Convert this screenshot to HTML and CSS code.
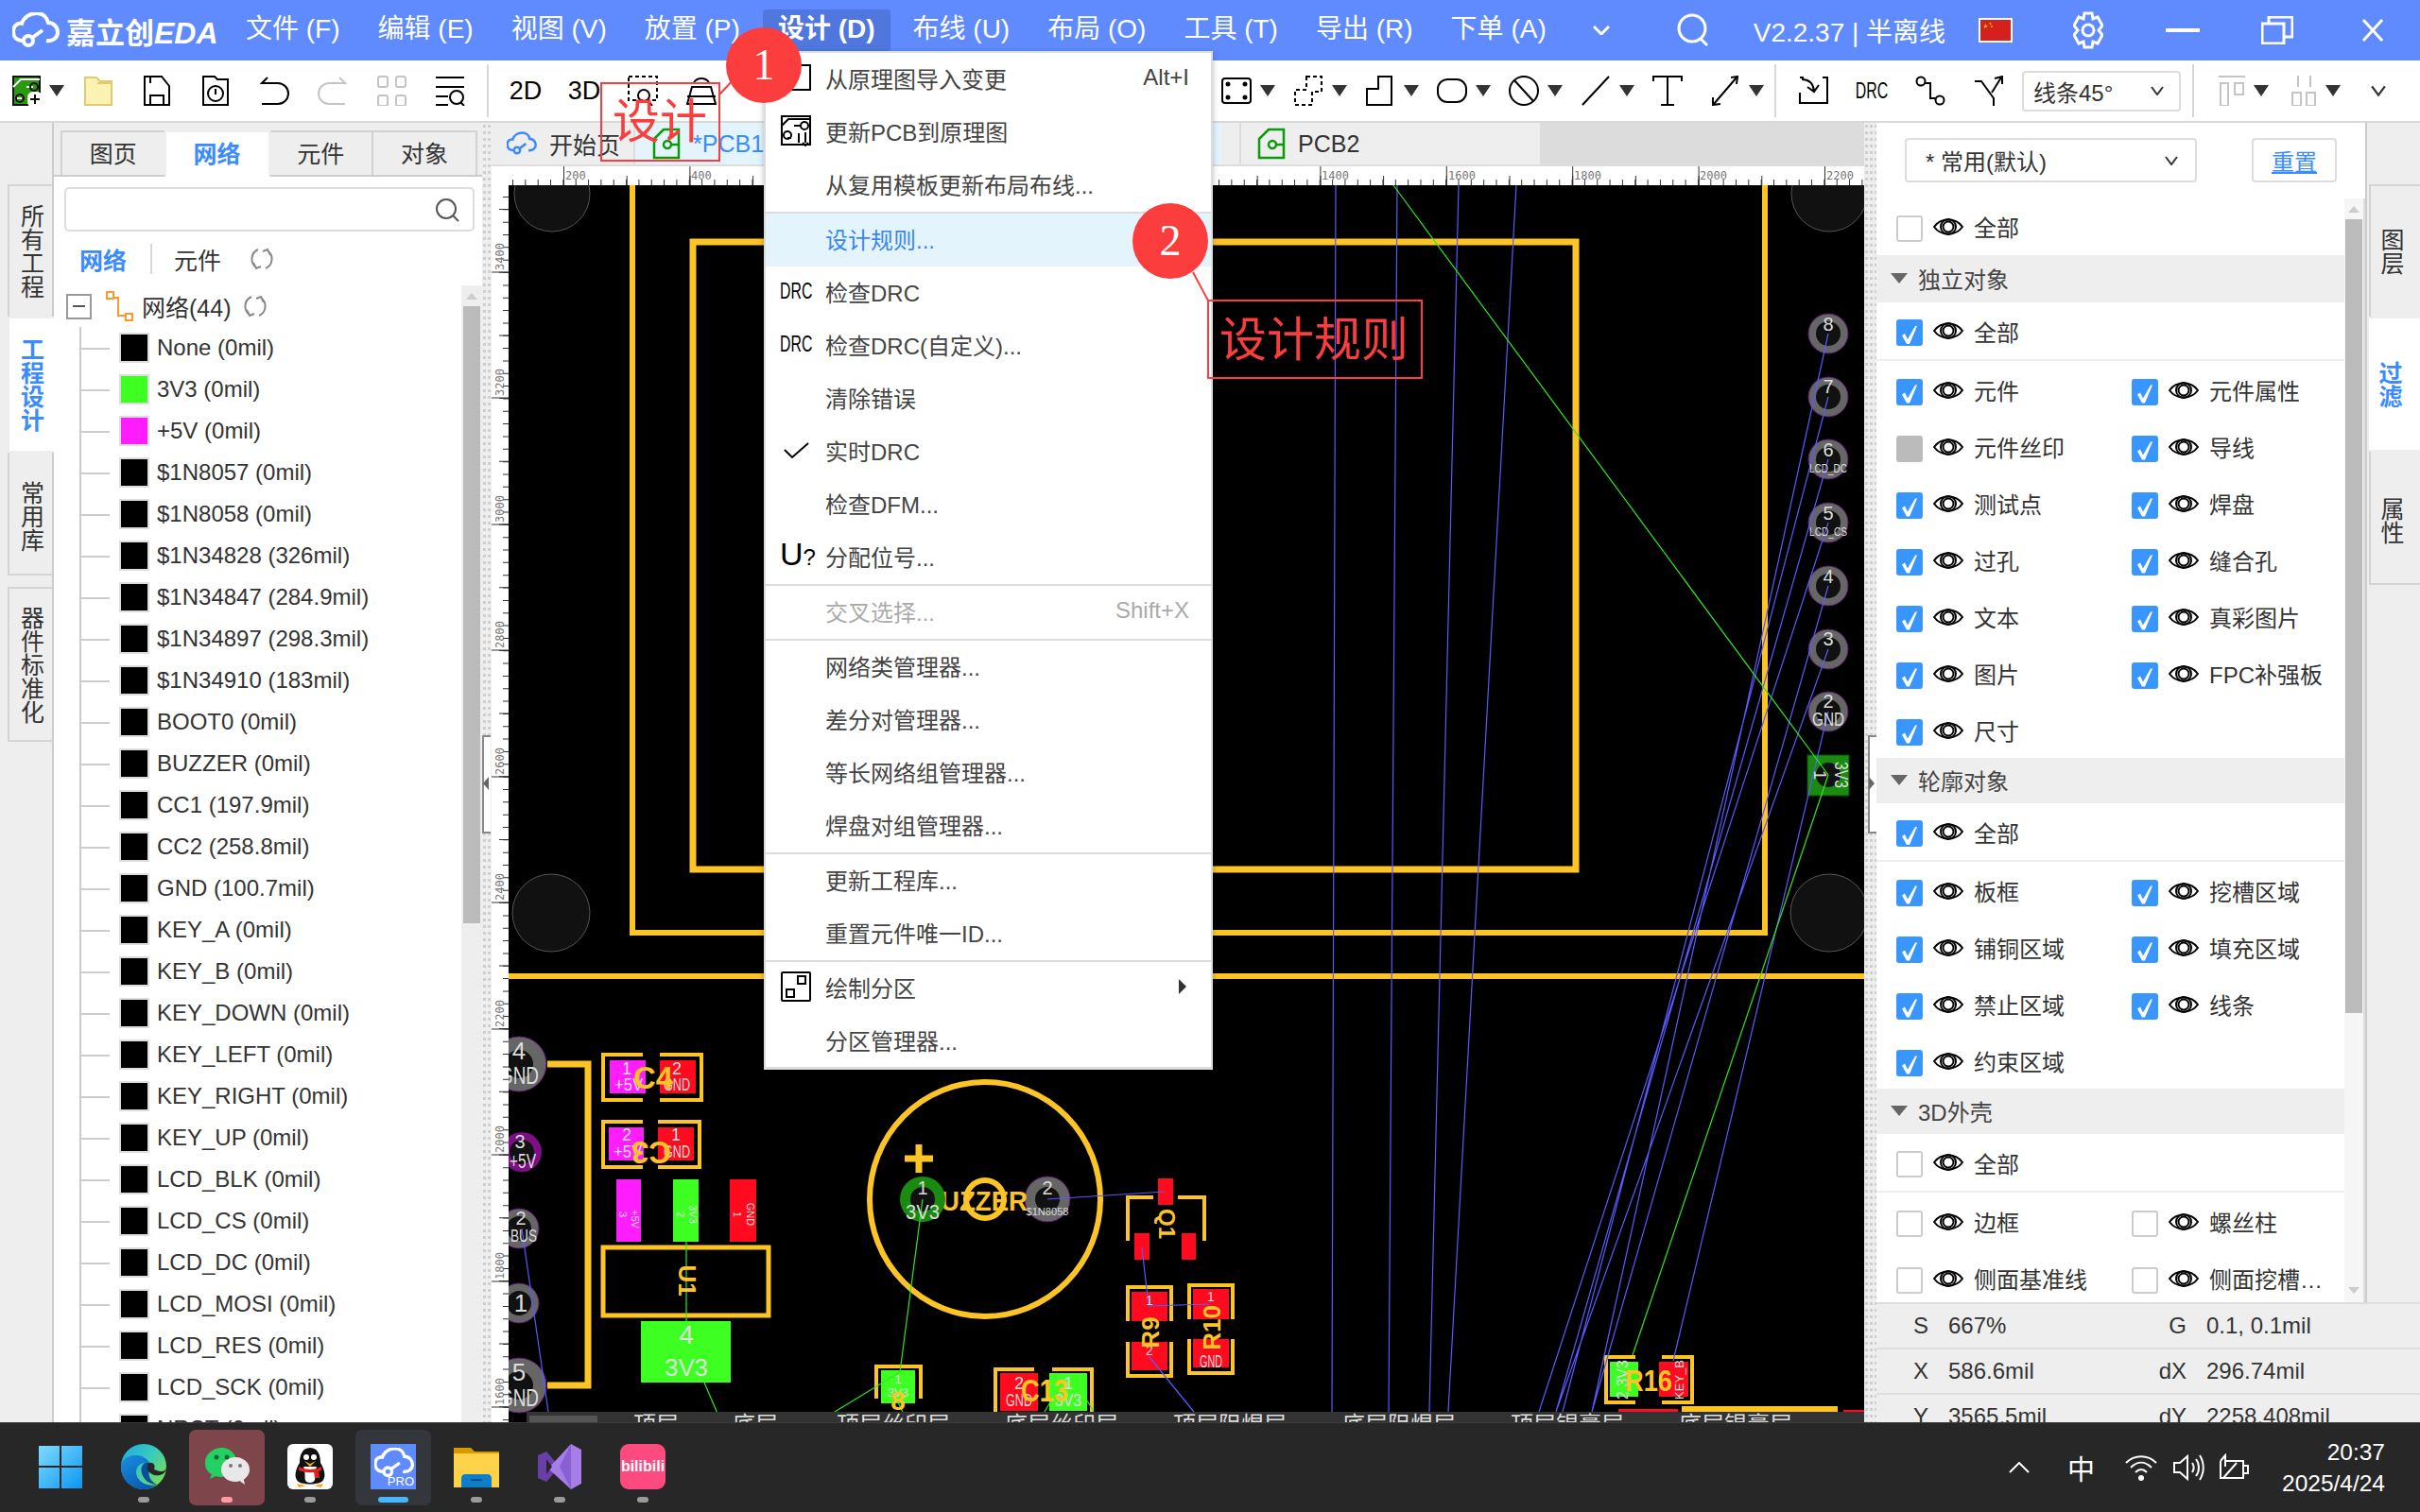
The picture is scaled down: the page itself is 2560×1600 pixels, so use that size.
FILE: index.html
```html
<!DOCTYPE html>
<html>
<head>
    <title>嘉立创EDA</title>
    <link rel="stylesheet" href="styles.css">
</head>
<body>
<svg class="sprite" width="0" height="0">
    <symbol id="eye" viewBox="0 0 32 22"><path d="M1 11C8 1 24 1 31 11C24 21 8 21 1 11Z"/><circle cx="16" cy="11" r="8"/><circle cx="16" cy="11" r="5.5"/></symbol>
    <symbol id="pin" viewBox="0 0 16 24"><path d="M4 1H12L11 4V10L14 14H9L8 23L7 14H2L5 10V4Z" fill="#111" stroke="none"/></symbol>
    <symbol id="refresh" viewBox="0 0 26 26"><path d="M9 3A11 11 0 0 0 7 22M17 23A11 11 0 0 0 19 4M4 17L7 23L12 21M22 9L19 3L14 5"/></symbol>
    <symbol id="cloud" viewBox="0 0 50 38"><path d="M11 30C4 30 1 25 1 20C1 15 5 11 10 12C12 5 19 1 26 1C33 1 37 6 38 11C44 11 48 16 48 21C48 27 43 31 36 30M21 27L32 19"/><circle cx="17" cy="30" r="5"/></symbol>
    <symbol id="pcb" viewBox="0 0 30 34"><path d="M2 12L12 2H28V32H2Z"/><circle cx="16" cy="18" r="4"/><path d="M20 18H28"/></symbol>
</svg>

<div class="app">
    <div class="titlebar">
        <svg class="logo"><use href="#cloud"/></svg>
        <span class="brand">嘉立创<em>EDA</em></span>
        <nav class="mainmenu">
            <a>文件 (F)</a><a>编辑 (E)</a><a>视图 (V)</a><a>放置 (P)</a><a class="open">设计 (D)</a><a>布线 (U)</a><a>布局 (O)</a><a>工具 (T)</a><a>导出 (R)</a><a>下单 (A)</a>
        </nav>
        <svg class="t-chev" viewBox="0 0 18 10"><path d="M1 1L9 9L17 1"/></svg>
        <svg class="t-search" viewBox="0 0 34 36"><circle cx="16" cy="16" r="14"/><path d="M25 27L32 34"/></svg>
        <span class="version">V2.2.37 | 半离线</span>
        <span class="flag"><svg viewBox="0 0 32 20"><path d="M5 3L7 7L3 5H8L4 8Z" fill="#fc0"/><path d="M10 2L11 4M12 5L12 7" stroke="#fc0" stroke-width="1.5"/></svg></span>
        <svg class="t-gear" viewBox="0 0 32 40"><path d="M12 2H20L21 8L26 6L31 15L27 20L31 25L26 34L21 32L20 38H12L11 32L6 34L1 25L5 20L1 15L6 6L11 8Z"/><circle cx="16" cy="20" r="6"/></svg>
        <svg class="t-min" viewBox="0 0 36 4"><rect width="36" height="4" fill="#fff"/></svg>
        <svg class="t-max" viewBox="0 0 34 30"><path d="M1 8H24V29H1ZM8 8V1H33V22H24"/></svg>
        <svg class="t-close" viewBox="0 0 24 24"><path d="M2 1L22 23M22 1L2 23"/></svg>
    </div>

    <div class="toolbar">
        <div class="tool first">
            <svg class="ico" viewBox="0 0 30 32"><path d="M1 1H29V31H1Z" fill="#2a9a10" stroke="#111"/><path d="M1 12L9 4H29M15 12H22M5 24H10" stroke="#fff" fill="none"/><circle cx="23" cy="12" r="4" stroke="#111"/><circle cx="8" cy="24" r="4" stroke="#111"/><rect x="16" y="17" width="16" height="17" rx="6" fill="#fff" stroke="none"/><path d="M24 20V30M19 25H29" stroke="#111"/></svg>
            <i class="caret"></i>
        </div>
        <div class="tool"><svg class="ico" viewBox="0 0 30 32"><path d="M1 2H13L17 6H29V31H1Z" fill="#fbf3b4" stroke="#e3cb6c"/><path d="M14 8H29" stroke="#e3cb6c"/></svg></div>
        <div class="tool"><svg class="ico" viewBox="0 0 30 32"><path d="M2 1H20L28 11V31H2ZM8 31V21H22V31M8 1V8"/></svg></div>
        <div class="tool"><svg class="ico" viewBox="0 0 30 32"><path d="M2 1H14L17 4H28V31H2Z"/><circle cx="15" cy="19" r="8"/><path d="M15 14V20"/></svg></div>
        <div class="tool"><svg class="ico" viewBox="0 0 32 32"><path d="M9 2L3 8L20 8A10 10 0 0 1 20 30H3"/></svg></div>
        <div class="tool"><svg class="ico off" viewBox="0 0 32 32"><path d="M23 2L29 8L12 8A10 10 0 0 0 12 30H29"/></svg></div>
        <div class="tool"><svg class="ico off" viewBox="0 0 32 32"><rect x="2" y="1" width="10" height="11" rx="2"/><rect x="21" y="1" width="10" height="11" rx="2"/><rect x="2" y="21" width="10" height="11" rx="2"/><rect x="21" y="21" width="10" height="11" rx="2"/></svg></div>
        <div class="tool"><svg class="ico" viewBox="0 0 32 32"><path d="M1 2H31M1 12H31M1 22H14M1 31H14"/><circle cx="23" cy="23" r="7"/><path d="M27 28L31 32"/></svg></div>
        <span class="tb-sep"></span>
        <div class="tool txt">2D</div>
        <div class="tool txt">3D</div>
        <div class="tool"><svg class="ico" viewBox="0 0 32 32"><path class="dash" d="M1 1H31V26H1Z"/><circle cx="17" cy="21" r="6"/><path d="M21 26L26 32"/></svg></div>
        <div class="tool"><svg class="ico" viewBox="0 0 32 32"><path d="M1 30L6 12H26L31 30ZM1 22H31M8 7A10 10 0 0 1 24 7"/></svg></div>

        <div class="tool drop after-menu"><svg class="ico" viewBox="0 0 32 32"><rect x="1" y="3" width="30" height="26" rx="3"/><circle cx="7" cy="9" r="1.5" fill="#000"/><circle cx="25" cy="9" r="1.5" fill="#000"/><circle cx="7" cy="23" r="1.5" fill="#000"/><circle cx="25" cy="23" r="1.5" fill="#000"/></svg><i class="caret"></i></div>
        <div class="tool drop"><svg class="ico" viewBox="0 0 32 32"><path class="dash" d="M14 1H30V17H20V31H2V15H14Z"/></svg><i class="caret"></i></div>
        <div class="tool drop"><svg class="ico" viewBox="0 0 32 32"><path d="M14 1H28V31H2V14H14Z"/></svg><i class="caret"></i></div>
        <div class="tool drop"><svg class="ico" viewBox="0 0 32 32"><rect x="1" y="4" width="30" height="24" rx="10"/></svg><i class="caret"></i></div>
        <div class="tool drop"><svg class="ico" viewBox="0 0 32 32"><circle cx="16" cy="16" r="15"/><path d="M6 5L26 27"/></svg><i class="caret"></i></div>
        <div class="tool drop"><svg class="ico" viewBox="0 0 32 32"><path d="M2 31L30 1"/></svg><i class="caret"></i></div>
        <div class="tool"><svg class="ico" viewBox="0 0 32 32"><path d="M1 6V1H31V6M16 1V31M9 31H23"/></svg></div>
        <div class="tool drop narrow"><svg class="ico" viewBox="0 0 32 32"><path d="M4 30L28 2M22 2L29 1L28 9M3 23L3 31L11 30"/></svg><i class="caret"></i></div>
        <span class="tb-sep s2"></span>
        <div class="tool"><svg class="ico" viewBox="0 0 32 32"><path d="M2 2H6M26 2H31V29H2V18M4 4C12 4 16 8 17 16M10 12L17 17L22 10"/></svg></div>
        <div class="tool"><span class="drc big">DRC</span></div>
        <div class="tool"><svg class="ico" viewBox="0 0 32 32"><circle cx="6" cy="6" r="4.5"/><circle cx="26" cy="26" r="4.5"/><path d="M10 8H16V24H21"/></svg></div>
        <div class="tool"><svg class="ico" viewBox="0 0 32 32"><path d="M1 6H8L21 24V32M19 18L29 2M22 3L30 1L30 9"/></svg></div>
        <div class="selectbox lines"><span>线条45°</span><svg class="chev" viewBox="0 0 14 10"><path d="M1 1L7 9L13 1"/></svg></div>
        <span class="tb-sep s3"></span>
        <div class="tool drop alt"><svg class="ico off" viewBox="0 0 28 32"><path d="M0 1H28M2 8H10V32H2ZM17 8H26V20H17Z"/></svg><i class="caret"></i></div>
        <div class="tool drop alt"><svg class="ico off" viewBox="0 0 28 32"><path d="M8 0V12M21 0V12M2 18H11V32H2ZM17 18H26V32H17Z"/></svg><i class="caret"></i></div>
        <svg class="chev tb-more" viewBox="0 0 14 10"><path d="M1 1L7 9L13 1"/></svg>
    </div>

    <div class="workspace">
        <aside class="rail">
            <div class="pinbox"><svg class="pin"><use href="#pin"/></svg></div>
            <div class="railtab">所有工程</div>
            <div class="railtab active">工程设计</div>
            <div class="railtab">常用库</div>
            <div class="railtab">器件标准化</div>
        </aside>

        <section class="leftpanel">
            <div class="ptabs">
                <span>图页</span><span class="active">网络</span><span>元件</span><span>对象</span>
            </div>
            <div class="pbody">
                <div class="searchbox"><svg viewBox="0 0 26 26"><circle cx="12" cy="12" r="10"/><path d="M19 19L25 25"/></svg></div>
                <div class="subtabs">
                    <span class="active">网络</span><i></i><span>元件</span>
                    <svg class="refresh"><use href="#refresh"/></svg>
                </div>
                <div class="treewrap">
                    <div class="tree">
                        <div class="treehead">
                            <span class="minus"></span>
                            <svg class="neticon" viewBox="0 0 30 32"><path d="M7 7H13V26H20"/><rect x="1" y="1" width="7" height="7"/><rect x="21" y="24" width="7" height="7"/></svg>
                            <span>网络(44)</span>
                            <svg class="refresh"><use href="#refresh"/></svg>
                        </div>
                        <ul class="nets">
                            <li><i></i>None (0mil)</li>
                            <li><i class="green"></i>3V3 (0mil)</li>
                            <li><i class="pink"></i>+5V (0mil)</li>
                            <li><i></i>$1N8057 (0mil)</li>
                            <li><i></i>$1N8058 (0mil)</li>
                            <li><i></i>$1N34828 (326mil)</li>
                            <li><i></i>$1N34847 (284.9mil)</li>
                            <li><i></i>$1N34897 (298.3mil)</li>
                            <li><i></i>$1N34910 (183mil)</li>
                            <li><i></i>BOOT0 (0mil)</li>
                            <li><i></i>BUZZER (0mil)</li>
                            <li><i></i>CC1 (197.9mil)</li>
                            <li><i></i>CC2 (258.8mil)</li>
                            <li><i></i>GND (100.7mil)</li>
                            <li><i></i>KEY_A (0mil)</li>
                            <li><i></i>KEY_B (0mil)</li>
                            <li><i></i>KEY_DOWN (0mil)</li>
                            <li><i></i>KEY_LEFT (0mil)</li>
                            <li><i></i>KEY_RIGHT (0mil)</li>
                            <li><i></i>KEY_UP (0mil)</li>
                            <li><i></i>LCD_BLK (0mil)</li>
                            <li><i></i>LCD_CS (0mil)</li>
                            <li><i></i>LCD_DC (0mil)</li>
                            <li><i></i>LCD_MOSI (0mil)</li>
                            <li><i></i>LCD_RES (0mil)</li>
                            <li><i></i>LCD_SCK (0mil)</li>
                            <li><i></i>NRST (0mil)</li>
                        </ul>
                    </div>
                    <div class="vscroll"><b class="up"></b><span class="thumb"></span></div>
                </div>
            </div>
        </section>

        <div class="splitter"><span class="grip left"></span></div>

        <main class="center">
            <div class="doctabs">
                <span class="dt start"><svg class="dt-logo"><use href="#cloud"/></svg>开始页</span>
                <span class="dt cur"><svg class="dt-pcb"><use href="#pcb"/></svg>*PCB1</span>
                <span class="dt other"><svg class="dt-pcb"><use href="#pcb"/></svg>PCB2</span>
            </div>
            <svg class="board" width="1452" height="1329" viewBox="520 176 1452 1329">
                <rect x="538" y="196" width="1434" height="1309" fill="#000"/>

                <!-- mounting holes -->
                <g class="hole">
                    <circle cx="584" cy="205" r="40"/><circle cx="1935" cy="205" r="40"/><circle cx="583" cy="966" r="41"/><circle cx="1935" cy="966" r="41"/>
                </g>

                <!-- outline -->
                <g class="silk">
                    <path d="M669 196V987H1867V196" stroke-width="6"/>
                    <path d="M733 920V256H1667V920Z" stroke-width="7"/>
                    <path d="M538 1033H1972" stroke-width="6"/>
                    <path d="M579 1126H622V1466H579" stroke-width="7"/>
                    <ellipse cx="1042" cy="1269" rx="122" ry="124" stroke-width="6"/>
                    <circle cx="1042" cy="1269" r="20" stroke-width="6"/>
                    <path d="M972 1211V1241M957 1226H987" stroke-width="7"/>
                    <rect x="638" y="1320" width="175" height="72" stroke-width="5"/>
                    <path d="M680 1116H638V1164H680M698 1116H742V1164H698" stroke-width="4"/>
                    <path d="M680 1187H638V1235H680M696 1187H740V1235H696" stroke-width="4"/>
                    <path d="M1193 1313V1267H1220M1246 1267H1274V1313" stroke-width="4"/>
                    <path d="M1193 1398V1362H1239V1398M1193 1420V1456H1239V1420" stroke-width="4"/>
                    <path d="M1258 1396V1360H1304V1396M1258 1417V1453H1304V1417" stroke-width="4"/>
                    <path d="M927 1480V1446H974V1480" stroke-width="4"/>
                    <path d="M1053 1494V1449H1094M1113 1449H1155V1494" stroke-width="4"/>
                    <path d="M1730 1436H1699V1484H1730M1758 1436H1790V1484H1758" stroke-width="4"/>
                </g>

                <!-- copper -->
                <g class="red">
                    <rect x="698" y="1122" width="38" height="35"/><rect x="696" y="1193" width="38" height="35"/><rect x="772" y="1248" width="28" height="66"/>
                    <rect x="1225" y="1247" width="16" height="28"/><rect x="1200" y="1305" width="16" height="28"/><rect x="1250" y="1305" width="15" height="28"/>
                    <rect x="1197" y="1367" width="38" height="31"/><rect x="1197" y="1420" width="38" height="30"/><rect x="1262" y="1364" width="38" height="32"/><rect x="1262" y="1417" width="38" height="30"/>
                    <rect x="1058" y="1453" width="40" height="40"/><rect x="1755" y="1441" width="31" height="37"/><rect x="1712" y="1491" width="63" height="14"/><rect x="1950" y="1492" width="22" height="3"/>
                </g>
                <g class="pink">
                    <rect x="645" y="1122" width="38" height="35"/><rect x="644" y="1193" width="37" height="35"/><rect x="652" y="1248" width="26" height="66"/>
                </g>
                <g class="lime">
                    <rect x="712" y="1248" width="27" height="66"/><rect x="678" y="1398" width="95" height="65"/><rect x="932" y="1450" width="36" height="35"/><rect x="1110" y="1453" width="40" height="40"/><rect x="1703" y="1441" width="30" height="37"/>
                </g>
                <rect class="silkfill" x="1779" y="1488" width="165" height="12"/>
                <rect x="1912" y="799" width="44" height="43" fill="#1a8a10" stroke="#0c4a08"/>
                <circle cx="1934" cy="820" r="13" fill="#111"/>

                <!-- pads -->
                <g class="pad">
                    <circle cx="1934" cy="353" r="21"/><circle cx="1934" cy="420" r="21"/><circle cx="1934" cy="486" r="21"/><circle cx="1934" cy="553" r="21"/><circle cx="1934" cy="620" r="21"/><circle cx="1934" cy="687" r="21"/><circle cx="1934" cy="753" r="21"/>
                    <circle cx="549" cy="1126" r="29"/><circle cx="549" cy="1300" r="21"/><circle cx="549" cy="1379" r="21"/><circle cx="549" cy="1466" r="29"/><circle cx="1108" cy="1269" r="24"/>
                </g>
                <g class="drill">
                    <circle cx="1934" cy="353" r="13"/><circle cx="1934" cy="420" r="13"/><circle cx="1934" cy="486" r="13"/><circle cx="1934" cy="553" r="13"/><circle cx="1934" cy="620" r="13"/><circle cx="1934" cy="687" r="13"/><circle cx="1934" cy="753" r="13"/>
                    <circle cx="549" cy="1126" r="15"/><circle cx="549" cy="1300" r="13"/><circle cx="549" cy="1379" r="13"/><circle cx="549" cy="1466" r="15"/><circle cx="1108" cy="1269" r="13"/>
                </g>
                <circle cx="552" cy="1219" r="21" fill="#7d0f86"/><circle cx="552" cy="1219" r="13" fill="#111"/>

                <!-- silk text under pads -->
                <text class="ref" x="1031" y="1281" text-anchor="middle" font-size="30" textLength="112" lengthAdjust="spacingAndGlyphs">BUZZER</text>
                <circle cx="976" cy="1269" r="24" fill="#1a8a10"/><circle cx="976" cy="1269" r="13" fill="#111"/>

                <!-- ratlines -->
                <g class="rat">
                    <path d="M1413 196L1409 1494M1478 196L1469 1494M1543 196L1512 1494M1604 196L1532 1494"/>
                    <path d="M1934 353L1684 1494M1934 420L1653 1494M1934 486L1646 1494M1934 553L1628 1494M1934 620L1684 1494M1934 687L1646 1494M1934 753L1770 1440"/>
                    <path d="M1108 1269L1232 1261M1208 1320L1215 1382L1280 1380M1215 1435L1263 1494M552 1300L580 1494"/>
                </g>
                <g class="air">
                    <path d="M1474 196L1934 820L1727 1434"/>
                    <path d="M726 1314V1398M745 1463L763 1505M976 1269L952 1452L883 1494M948 1480L955 1494M1105 1494L1112 1482M1150 1482L1157 1494"/>
                </g>

                <!-- pad labels -->
                <g class="lbl" font-size="20">
                    <text x="1934" y="350">8</text><text x="1934" y="416">7</text><text x="1934" y="483">6</text><text x="1934" y="550">5</text><text x="1934" y="617">4</text><text x="1934" y="683">3</text><text x="1934" y="749">2</text>
                    <text x="1934" y="500" font-size="12" textLength="40" lengthAdjust="spacingAndGlyphs">LCD_DC</text><text x="1934" y="567" font-size="12" textLength="40" lengthAdjust="spacingAndGlyphs">LCD_CS</text><text x="1934" y="768" font-size="20" textLength="34" lengthAdjust="spacingAndGlyphs">GND</text>
                    <text transform="translate(1941,820) rotate(90)" font-size="20" textLength="28" lengthAdjust="spacingAndGlyphs">3V3</text><text transform="translate(1919,820) rotate(90)" font-size="18">1</text>
                    <text x="549" y="1121" font-size="26">4</text><text x="549" y="1147" font-size="26" textLength="42" lengthAdjust="spacingAndGlyphs">GND</text>
                    <text x="550" y="1215" font-size="20">3</text><text x="553" y="1236" font-size="22" textLength="28" lengthAdjust="spacingAndGlyphs">+5V</text>
                    <text x="551" y="1296" font-size="20">2</text><text x="554" y="1314" font-size="18" textLength="28" lengthAdjust="spacingAndGlyphs">BUS</text>
                    <text x="551" y="1388" font-size="26">1</text>
                    <text x="549" y="1461" font-size="26">5</text><text x="549" y="1488" font-size="26" textLength="42" lengthAdjust="spacingAndGlyphs">GND</text>
                    <text x="663" y="1137" font-size="18">1</text><text x="665" y="1154" font-size="18" textLength="30" lengthAdjust="spacingAndGlyphs">+5V</text>
                    <text x="716" y="1137" font-size="18">2</text><text x="716" y="1154" font-size="18" textLength="28" lengthAdjust="spacingAndGlyphs">GND</text>
                    <text x="663" y="1207" font-size="18">2</text><text x="664" y="1225" font-size="18" textLength="30" lengthAdjust="spacingAndGlyphs">+5V</text>
                    <text x="715" y="1207" font-size="18">1</text><text x="716" y="1225" font-size="18" textLength="28" lengthAdjust="spacingAndGlyphs">GND</text>
                    <text x="726" y="1422" font-size="28">4</text><text x="726" y="1456" font-size="26" textLength="46" lengthAdjust="spacingAndGlyphs">3V3</text>
                    <text x="976" y="1264" font-size="20">1</text><text x="976" y="1290" font-size="22" textLength="36" lengthAdjust="spacingAndGlyphs">3V3</text>
                    <text x="1108" y="1264" font-size="20">2</text><text x="1108" y="1286" font-size="11" textLength="45" lengthAdjust="spacingAndGlyphs">$1N8058</text>
                    <text x="1216" y="1381" font-size="14">1</text><text x="1216" y="1434" font-size="14">2</text>
                    <text x="1281" y="1377" font-size="14">1</text><text x="1281" y="1447" font-size="18" textLength="24" lengthAdjust="spacingAndGlyphs">GND</text>
                    <text x="950" y="1464" font-size="13">1</text><text x="950" y="1478" font-size="13" textLength="22" lengthAdjust="spacingAndGlyphs">3V3</text>
                    <text x="1078" y="1470" font-size="18">2</text><text x="1078" y="1488" font-size="18" textLength="28" lengthAdjust="spacingAndGlyphs">GND</text>
                    <text x="1130" y="1470" font-size="18">1</text><text x="1130" y="1488" font-size="18" textLength="28" lengthAdjust="spacingAndGlyphs">3V3</text>
                    <text transform="translate(668,1290) rotate(90)" font-size="11">+5V</text><text transform="translate(655,1285) rotate(90)" font-size="11">3</text>
                    <text transform="translate(729,1285) rotate(90)" font-size="11">3V3</text><text transform="translate(716,1285) rotate(90)" font-size="11">2</text>
                    <text transform="translate(790,1285) rotate(90)" font-size="11">GND</text><text transform="translate(776,1285) rotate(90)" font-size="11">1</text>
                    <text transform="translate(1722,1460) rotate(-90)" font-size="16">2 3V3</text>
                    <text transform="translate(1781,1460) rotate(-90)" font-size="13">KEY_B</text>
                </g>

                <!-- designators -->
                <g class="ref">
                    <text x="691" y="1152" font-size="34" text-anchor="middle" textLength="42" lengthAdjust="spacingAndGlyphs">C4</text>
                    <text transform="translate(689,1208) rotate(180)" font-size="34" text-anchor="middle" textLength="42" lengthAdjust="spacingAndGlyphs">C3</text>
                    <text transform="translate(718,1355) rotate(90)" font-size="26" text-anchor="middle">U1</text>
                    <text transform="translate(1226,1295) rotate(90)" font-size="24" text-anchor="middle">Q1</text>
                    <text transform="translate(1226,1410) rotate(-90)" font-size="26" text-anchor="middle">R9</text>
                    <text transform="translate(1291,1405) rotate(-90)" font-size="26" text-anchor="middle">R10</text>
                    <text x="950" y="1492" font-size="28" text-anchor="middle">8</text>
                    <text x="1105" y="1483" font-size="34" text-anchor="middle" textLength="50" lengthAdjust="spacingAndGlyphs">C13</text>
                    <text x="1744" y="1472" font-size="32" text-anchor="middle" textLength="50" lengthAdjust="spacingAndGlyphs">R16</text>
                </g>

                <!-- rulers sit over the board so pads and holes are cut at their edge -->
                <rect x="520" y="176" width="1452" height="20" fill="#fff"/>
                <rect x="520" y="176" width="18" height="1329" fill="#fff"/>
                <g class="tick">
                    <line x1="542" y1="193" x2="1972" y2="193" stroke-width="6" stroke-dasharray="1 12.34"/>
                    <line x1="596" y1="191" x2="1972" y2="191" stroke-width="10" stroke-dasharray="1 65.7"/>
                    <line x1="596" y1="186" x2="1972" y2="186" stroke-width="20" stroke-dasharray="1 132.4"/>
                    <line x1="535" y1="208" x2="535" y2="1505" stroke-width="6" stroke-dasharray="1 12.34"/>
                    <line x1="533" y1="221" x2="533" y2="1505" stroke-width="10" stroke-dasharray="1 65.7"/>
                    <path d="M520 288H538M520 421H538M520 555H538M520 688H538M520 822H538M520 955H538M520 1089H538M520 1222H538M520 1356H538M520 1489H538" stroke-width="1"/>
                </g>
                <g class="rtext">
                    <text x="598" y="190">200</text><text x="731" y="190">400</text><text x="1398" y="190">1400</text><text x="1532" y="190">1600</text><text x="1665" y="190">1800</text><text x="1798" y="190">2000</text><text x="1932" y="190">2200</text>
                    <text transform="translate(533,286) rotate(-90)">3400</text><text transform="translate(533,419) rotate(-90)">3200</text><text transform="translate(533,553) rotate(-90)">3000</text><text transform="translate(533,686) rotate(-90)">2800</text><text transform="translate(533,820) rotate(-90)">2600</text><text transform="translate(533,953) rotate(-90)">2400</text><text transform="translate(533,1087) rotate(-90)">2200</text><text transform="translate(533,1220) rotate(-90)">2000</text><text transform="translate(533,1354) rotate(-90)">1800</text><text transform="translate(533,1487) rotate(-90)">1600</text>
                </g>

                <!-- layer tabs peeking out -->
                <g class="layers">
                    <rect x="557" y="1494" width="1415" height="11"/>
                    <rect class="lybox" x="560" y="1498" width="72" height="7"/>
                    <text x="670" y="1516">顶层</text><text x="775" y="1516">底层</text>
                    <text x="885" y="1516">顶层丝印层</text><text x="1063" y="1516">底层丝印层</text><text x="1241" y="1516">顶层阻焊层</text><text x="1420" y="1516">底层阻焊层</text><text x="1598" y="1516">顶层锡膏层</text><text x="1776" y="1516">底层锡膏层</text>
                </g>
            </svg>
        </main>

        <div class="splitter wide"><span class="grip right"></span></div>

        <section class="rightside">
            <div class="rightmain">
                <div class="filterpanel">
                    <div class="filterhead">
                        <div class="selectbox scheme"><span>* 常用(默认)</span><svg class="chev" viewBox="0 0 14 10"><path d="M1 1L7 9L13 1"/></svg></div>
                        <span class="resetbtn">重置</span>
                    </div>
                    <div class="filterbody">
                        <div class="filterlist">
                            <div class="fall first"><span class="cb"></span><svg class="eye"><use href="#eye"/></svg>全部</div>
                            <div class="fsec tall"><i></i>独立对象</div>
                            <div class="fall"><span class="cb on"></span><svg class="eye"><use href="#eye"/></svg>全部</div>
                            <div class="fgrid">
                                <div><span class="cb on"></span><svg class="eye"><use href="#eye"/></svg>元件</div>
                                <div><span class="cb on"></span><svg class="eye"><use href="#eye"/></svg>元件属性</div>
                                <div><span class="cb mid"></span><svg class="eye"><use href="#eye"/></svg>元件丝印</div>
                                <div><span class="cb on"></span><svg class="eye"><use href="#eye"/></svg>导线</div>
                                <div><span class="cb on"></span><svg class="eye"><use href="#eye"/></svg>测试点</div>
                                <div><span class="cb on"></span><svg class="eye"><use href="#eye"/></svg>焊盘</div>
                                <div><span class="cb on"></span><svg class="eye"><use href="#eye"/></svg>过孔</div>
                                <div><span class="cb on"></span><svg class="eye"><use href="#eye"/></svg>缝合孔</div>
                                <div><span class="cb on"></span><svg class="eye"><use href="#eye"/></svg>文本</div>
                                <div><span class="cb on"></span><svg class="eye"><use href="#eye"/></svg>真彩图片</div>
                                <div><span class="cb on"></span><svg class="eye"><use href="#eye"/></svg>图片</div>
                                <div><span class="cb on"></span><svg class="eye"><use href="#eye"/></svg>FPC补强板</div>
                                <div><span class="cb on"></span><svg class="eye"><use href="#eye"/></svg>尺寸</div>
                            </div>
                            <div class="fsec"><i></i>轮廓对象</div>
                            <div class="fall"><span class="cb on"></span><svg class="eye"><use href="#eye"/></svg>全部</div>
                            <div class="fgrid">
                                <div><span class="cb on"></span><svg class="eye"><use href="#eye"/></svg>板框</div>
                                <div><span class="cb on"></span><svg class="eye"><use href="#eye"/></svg>挖槽区域</div>
                                <div><span class="cb on"></span><svg class="eye"><use href="#eye"/></svg>铺铜区域</div>
                                <div><span class="cb on"></span><svg class="eye"><use href="#eye"/></svg>填充区域</div>
                                <div><span class="cb on"></span><svg class="eye"><use href="#eye"/></svg>禁止区域</div>
                                <div><span class="cb on"></span><svg class="eye"><use href="#eye"/></svg>线条</div>
                                <div><span class="cb on"></span><svg class="eye"><use href="#eye"/></svg>约束区域</div>
                            </div>
                            <div class="fsec"><i></i>3D外壳</div>
                            <div class="fall"><span class="cb"></span><svg class="eye"><use href="#eye"/></svg>全部</div>
                            <div class="fgrid">
                                <div><span class="cb"></span><svg class="eye"><use href="#eye"/></svg>边框</div>
                                <div><span class="cb"></span><svg class="eye"><use href="#eye"/></svg>螺丝柱</div>
                                <div><span class="cb"></span><svg class="eye"><use href="#eye"/></svg>侧面基准线</div>
                                <div><span class="cb"></span><svg class="eye"><use href="#eye"/></svg>侧面挖槽…</div>
                            </div>
                        </div>
                        <div class="vscroll small"><b class="up"></b><span class="thumb"></span><b class="down"></b></div>
                    </div>
                </div>
                <aside class="rail right">
                    <div class="pinbox"><svg class="pin"><use href="#pin"/></svg></div>
                    <div class="railtab">图层</div>
                    <div class="railtab active">过滤</div>
                    <div class="railtab">属性</div>
                </aside>
            </div>
            <div class="status">
                <div><b>S</b><span>667%</span><b>G</b><span>0.1, 0.1mil</span></div>
                <div><b>X</b><span>586.6mil</span><b>dX</b><span>296.74mil</span></div>
                <div><b>Y</b><span>3565.5mil</span><b>dY</b><span>2258.408mil</span></div>
            </div>
        </section>
    </div>

    <footer class="taskbar">
        <div class="slot">
            <svg class="app-ico" viewBox="0 0 48 48"><defs><linearGradient id="win" x1="0" y1="0" x2="1" y2="1"><stop offset="0" stop-color="#7fdcff"/><stop offset="1" stop-color="#0a96f5"/></linearGradient></defs><path d="M1 2H23V23H1ZM25 2H47V23H25ZM1 25H23V47H1ZM25 25H47V47H25Z" fill="url(#win)"/></svg>
        </div>
        <div class="slot">
            <svg class="app-ico" viewBox="0 0 48 48"><defs><linearGradient id="edge1" x1="0" y1="0" x2="1" y2=".8"><stop offset="0" stop-color="#1fa8e8"/><stop offset=".5" stop-color="#35c9c0"/><stop offset="1" stop-color="#7ee04a"/></linearGradient><linearGradient id="edge2" x1="0" y1="0" x2=".6" y2="1"><stop offset="0" stop-color="#1a8fe0"/><stop offset="1" stop-color="#0b5bb0"/></linearGradient></defs><circle cx="24" cy="24" r="24" fill="url(#edge1)"/><path d="M0 24C1 15 10 11 18 12C24 13 28 16 30 20C24 18 16 22 16 30C16 38 26 46 38 43C34 46 29 48 24 48C10 48 0 37 0 24Z" fill="url(#edge2)"/><path d="M30 20C24 18 20 24 22 31C24 38 30 43 38 43C32 40 28 34 30 28Z" fill="#0a4f9c"/><path d="M30 20C34 19 37 23 35 27C42 30 47 30 48 25C48 33 38 35 33 32C27 29 26 23 30 20Z" fill="#272727"/></svg>
            <em class="dot"></em>
        </div>
        <div class="slot lit">
            <svg class="app-ico" viewBox="0 0 48 48"><path d="M19 4C9 4 1 11 1 20C1 26 4 30 8 32L6 37L12 34C15 35 17 35 20 35L34 16C32 9 26 4 19 4Z" fill="#24d064"/><ellipse cx="33" cy="27" rx="15" ry="13" fill="#e8e8e8"/><path d="M36 38L43 43L41 34Z" fill="#e8e8e8"/><circle cx="13" cy="14" r="2.5" fill="#0d6b32"/><circle cx="24" cy="14" r="2.5" fill="#0d6b32"/><circle cx="28" cy="23" r="2" fill="#777"/><circle cx="38" cy="23" r="2" fill="#777"/></svg>
            <em class="dot pinkdot"></em>
        </div>
        <div class="slot">
            <svg class="app-ico" viewBox="0 0 48 48"><rect width="48" height="48" rx="6" fill="#fff"/><path d="M24 4C15 4 13 13 13 20C9 26 7 34 10 38C12 44 36 44 38 38C41 34 39 26 35 20C35 13 33 4 24 4Z" fill="#111"/><path d="M17 24C21 34 15 40 24 41C33 40 27 34 31 24Z" fill="#fff"/><circle cx="20" cy="14" r="3" fill="#fff"/><circle cx="28" cy="14" r="3" fill="#fff"/><path d="M18 18L24 21L30 18L24 24Z" fill="#fba41e"/><path d="M12 24C20 28 28 28 36 24L36 28C28 31 20 31 12 28ZM28 29H33L34 36H29Z" fill="#e51d1d"/><path d="M10 42L20 44L12 46ZM38 42L28 44L36 46Z" fill="#fba41e"/></svg>
            <em class="dot"></em>
        </div>
        <div class="slot cur">
            <span class="eda-tile"><svg><use href="#cloud"/></svg><small>PRO</small></span>
            <em class="dot bluedot"></em>
        </div>
        <div class="slot">
            <svg class="app-ico" viewBox="0 0 48 48"><path d="M0 4H18L22 8H48V46H0Z" fill="#d99a00"/><path d="M0 10H48V46H0Z" fill="#ffd24a"/><path d="M8 36C8 34 10 32 12 32H36C38 32 40 34 40 36V46H8Z" fill="#0d7fc9"/><rect x="18" y="37" width="12" height="2" fill="#0a4f8a"/></svg>
            <em class="dot"></em>
        </div>
        <div class="slot">
            <svg class="app-ico" viewBox="0 0 48 48"><path d="M1 12L10 8L24 24L10 40L1 36Z" fill="#6a3ea8"/><path d="M36 0L47 6V42L36 48L12 26Z" fill="#a67ee6"/><path d="M36 0L36 48L24 24Z" fill="#8a5fd4"/><path d="M10 16L16 24L10 32Z" fill="#272727"/></svg>
            <em class="dot"></em>
        </div>
        <div class="slot">
            <span class="bili">bilibili</span>
            <em class="dot"></em>
        </div>

        <div class="tray">
            <svg class="tr chevup" viewBox="0 0 22 12"><path d="M1 11L11 1L21 11"/></svg>
            <span class="tr ime">中</span>
            <svg class="tr" viewBox="0 0 34 30"><path d="M1 10C10 1 24 1 33 10M6 15C13 8 21 8 28 15M11 20C15 16 19 16 23 20"/><circle cx="17" cy="26" r="3" fill="#fff" stroke="none"/></svg>
            <svg class="tr" viewBox="0 0 34 30"><path d="M2 10H8L16 3V27L8 20H2ZM21 10C23 13 23 17 21 20M25 6C29 11 29 19 25 24M29 2C34 10 34 20 29 28"/></svg>
            <svg class="tr bat" viewBox="0 0 34 30"><path d="M7 8H27V26H3V8M27 13H32V21H27M3 8L8 2V14M6 26L20 10"/></svg>
            <div class="clock"><span>20:37</span><span>2025/4/24</span></div>
        </div>
    </footer>

    <!-- open design menu -->
    <div class="ddmenu">
        <div class="mi"><span class="mi-ico"><svg viewBox="0 0 34 34"><rect x="2" y="4" width="30" height="26"/></svg></span>从原理图导入变更<kbd>Alt+I</kbd></div>
        <div class="mi"><span class="mi-ico"><svg viewBox="0 0 34 34"><path d="M2 2H32V32H2ZM2 12L9 5H32M15 12H22M8 25H12"/><circle cx="26" cy="12" r="4"/><circle cx="8" cy="22" r="4"/><path d="M20 20V30M27 19V30M24 30L27 33L30 30"/></svg></span>更新PCB到原理图</div>
        <div class="mi"><span class="mi-ico"></span>从复用模板更新布局布线...</div>
        <hr>
        <div class="mi hot"><span class="mi-ico"></span>设计规则...</div>
        <div class="mi"><span class="mi-ico"><span class="drc">DRC</span></span>检查DRC</div>
        <div class="mi"><span class="mi-ico"><span class="drc">DRC</span></span>检查DRC(自定义)...</div>
        <div class="mi"><span class="mi-ico"></span>清除错误</div>
        <div class="mi"><span class="mi-ico"><svg viewBox="0 0 34 34"><path d="M5 17L13 25L30 10"/></svg></span>实时DRC</div>
        <div class="mi"><span class="mi-ico"></span>检查DFM...</div>
        <div class="mi"><span class="mi-ico"><span class="uq">U<small>?</small></span></span>分配位号...</div>
        <hr>
        <div class="mi dim"><span class="mi-ico"></span>交叉选择...<kbd>Shift+X</kbd></div>
        <hr>
        <div class="mi"><span class="mi-ico"></span>网络类管理器...</div>
        <div class="mi"><span class="mi-ico"></span>差分对管理器...</div>
        <div class="mi"><span class="mi-ico"></span>等长网络组管理器...</div>
        <div class="mi"><span class="mi-ico"></span>焊盘对组管理器...</div>
        <hr>
        <div class="mi"><span class="mi-ico"></span>更新工程库...</div>
        <div class="mi"><span class="mi-ico"></span>重置元件唯一ID...</div>
        <hr>
        <div class="mi"><span class="mi-ico"><svg viewBox="0 0 34 34"><rect x="2" y="2" width="30" height="30" rx="1"/><rect x="19" y="6" width="8" height="8"/><rect x="7" y="20" width="8" height="8"/></svg></span>绘制分区<i class="sub"></i></div>
        <div class="mi"><span class="mi-ico"></span>分区管理器...</div>
    </div>

    <!-- tutorial marks drawn on top of the screenshot -->
    <svg class="notes" width="2560" height="1600">
        <path d="M761 100L778 82M1262 288L1278 318"/>
        <rect x="636" y="88" width="125" height="82"/>
        <rect x="1278" y="318" width="226" height="82"/>
        <circle class="dotmark" cx="808" cy="69" r="40"/>
        <circle class="dotmark" cx="1238" cy="255" r="40"/>
        <text class="num" x="808" y="84">1</text>
        <text class="num" x="1238" y="270">2</text>
        <text class="cap" x="648" y="146">设计</text>
        <text class="cap" x="1290" y="377">设计规则</text>
    </svg>
</div>
</body>
</html>
```
FILE: styles.css
```css
* { box-sizing: border-box; }
html, body { margin: 0; padding: 0; }
body { width: 2560px; height: 1600px; overflow: hidden; font-family: "Liberation Sans", "Noto Sans CJK SC", sans-serif; color: #333; background: #eee; }
.sprite { position: absolute; }
.sprite path, .sprite circle { fill: none; }

.app { position: relative; width: 2560px; height: 1600px; display: flex; flex-direction: column; overflow: hidden; }

/* title bar */
.titlebar { height: 64px; flex: none; background: #5f8bff; display: flex; align-items: center; color: #fff; }
.titlebar svg { fill: none; stroke: #fff; stroke-width: 3; flex: none; }
.logo { width: 50px; height: 38px; margin-left: 13px; }
.logo use { stroke: #fff; stroke-width: 4; }
.brand { font-size: 31px; margin-left: 7px; width: 174px; font-weight: 700; white-space: nowrap; }
.brand em { font-size: 32px; font-weight: 700; }
.mainmenu { display: flex; gap: 8px; }
.mainmenu a { display: block; height: 44px; line-height: 42px; padding: 0 16px; font-size: 28px; border-radius: 4px; white-space: nowrap; }
.mainmenu a.open { background: #4f77dd; font-weight: 700; }
.t-chev { width: 18px; height: 10px; margin-left: 33px; }
.t-search { width: 34px; height: 36px; margin-left: 71px; stroke-width: 3; }
.version { font-size: 28px; margin-left: 47px; width: 238px; white-space: nowrap; }
.flag { width: 36px; height: 26px; background: #d6201c; border: 2px solid #fff; display: block; }
.flag svg { display: block; width: 32px; height: 22px; stroke: none; }
.t-gear { width: 32px; height: 40px; margin-left: 64px; }
.t-min { width: 36px; height: 4px; margin-left: 66px; }
.t-max { width: 34px; height: 30px; margin-left: 65px; }
.t-close { width: 24px; height: 24px; margin-left: 72px; stroke-width: 3.5; }

/* tool bar */
.toolbar { height: 66px; flex: none; background: #fff; border-bottom: 2px solid #d8d8d8; display: flex; align-items: center; }
.tool { width: 62px; height: 64px; display: flex; align-items: center; justify-content: center; flex: none; }
.tool.first { width: 73px; justify-content: flex-start; padding-left: 13px; gap: 9px; }
.tool.txt { font-size: 27px; color: #000; }
.ico { width: 32px; height: 32px; fill: none; stroke: #000; stroke-width: 2; flex: none; }
.ico.off { stroke: #c4c4c4; }
.ico .dash { stroke-dasharray: 4 3; }
.first .ico { width: 30px; }
.first .ico * { stroke-width: 2; }
.caret { width: 0; height: 0; border-left: 8px solid transparent; border-right: 8px solid transparent; border-top: 12px solid #333; flex: none; }
.tb-sep { width: 2px; height: 56px; background: #d8d8d8; flex: none; margin-left: 8px; margin-right: 8px; }
.tool.drop { width: 76px; justify-content: flex-start; padding-left: 15px; gap: 9px; }
.tool.drop.narrow { width: 76px; margin-left: -1px; }
.tool.drop.alt { width: 76px; padding-left: 19px; }
.tool.drop.alt .ico { width: 28px; }
.after-menu { margin-left: 504px; }
.tb-sep.s2 { margin-left: 7px; margin-right: 8px; }
.tb-sep.s3 { margin-left: 12px; margin-right: 7px; }
.drc { display: inline-block; font-size: 24px; color: #000; transform: scaleX(.66); transform-origin: left center; white-space: nowrap; }
.drc.big { transform-origin: center; }
.selectbox { border: 2px solid #ddd; border-radius: 4px; display: flex; align-items: center; font-size: 24px; justify-content: space-between; flex: none; }
.selectbox.lines { width: 168px; height: 43px; padding: 0 16px 0 10px; margin-left: 4px; }
.chev { width: 14px; height: 10px; fill: none; stroke: #333; stroke-width: 2; flex: none; }
.tb-more { margin-left: 28px; width: 16px; height: 12px; }

/* main area */
.workspace { flex: 1; display: flex; min-height: 0; }

.rail { width: 57px; flex: none; background: #eee; border-right: 2px solid #ccc; padding-left: 8px; }
.pinbox { height: 65px; display: flex; align-items: center; justify-content: center; padding-right: 8px; }
.pin { width: 16px; height: 24px; }
.railtab { writing-mode: vertical-rl; text-orientation: upright; width: 47px; height: 142px; display: flex; align-items: center; justify-content: center; font-size: 25px; letter-spacing: 0; border: 2px solid #d4d4d4; border-right: 0; background: #eee; }
.railtab + .railtab { margin-top: -2px; height: 144px; }
.railtab.active { background: #fff; color: #3a8bff; font-weight: 700; border-color: #eee; width: 49px; padding-right: 2px; position: relative; }
.rail > .railtab:nth-child(4) { height: 132px; padding-top: 6px; }
.rail > .railtab:nth-child(5) { height: 164px; margin-top: 12px; }

.leftpanel { width: 453px; flex: none; background: #eee; display: flex; flex-direction: column; min-height: 0; }
.ptabs { height: 57px; padding: 8px 7px 0 7px; display: flex; flex: none; border-bottom: 2px solid #ccc; }
.ptabs span { flex: 1; height: 47px; padding-bottom: 3px; background: #eee; border: 2px solid #d2d2d2; border-bottom: 0; margin-right: -2px; display: flex; align-items: center; justify-content: center; font-size: 25px; }
.ptabs span.active { background: #fff; color: #3a8bff; font-weight: 700; height: 49px; border-color: #eee; position: relative; padding-bottom: 5px; }
.pbody { flex: 1; background: #fff; min-height: 0; display: flex; flex-direction: column; }
.searchbox { margin: 11px 8px 0 11px; height: 47px; border: 2px solid #ddd; border-radius: 5px; flex: none; display: flex; align-items: center; justify-content: flex-end; padding-right: 14px; }
.searchbox svg { width: 26px; height: 26px; fill: none; stroke: #555; stroke-width: 2; }
.subtabs { height: 57px; flex: none; display: flex; align-items: center; padding-left: 27px; font-size: 25px; }
.subtabs .active { color: #3a8bff; font-weight: 700; }
.subtabs i { width: 2px; height: 32px; background: #d8d8d8; margin: 0 23px 0 25px; }
.refresh { width: 26px; height: 26px; margin-left: 30px; fill: none; stroke: #888; stroke-width: 2; flex: none; }
.treewrap { flex: 1; display: flex; min-height: 0; }
.tree { flex: 1; min-width: 0; overflow: hidden; }
.treehead { height: 44px; display: flex; align-items: center; padding-left: 13px; font-size: 25px; }
.minus { width: 27px; height: 27px; border: 2px solid #999; position: relative; flex: none; }
.minus::after { content: ""; position: absolute; left: 5px; right: 5px; top: 10px; height: 2px; background: #555; }
.neticon { width: 30px; height: 32px; margin: 0 8px 0 15px; fill: none; stroke: #f89a2e; stroke-width: 2; flex: none; }
.treehead .refresh { margin-left: 13px; }
.nets { list-style: none; margin: 0 0 0 27px; padding: 0; border-left: 2px solid #ccc; }
.nets li { height: 44px; display: flex; align-items: center; padding-left: 40px; font-size: 24px; position: relative; white-space: nowrap; }
.nets li::before { content: ""; position: absolute; left: 0; top: 22px; width: 30px; height: 2px; background: #ccc; }
.nets li i { width: 32px; height: 32px; border: 2px solid #ddd; background: #000; margin-right: 8px; flex: none; }
.nets li i.green { background: #3eff22; }
.nets li i.pink { background: #ff1dff; }

.vscroll { width: 22px; flex: none; background: #eee; padding: 0 2px; }
.vscroll .thumb { display: block; background: #bbb; width: 18px; height: 653px; }
.vscroll .up { display: block; height: 22px; position: relative; }
.vscroll .up::after, .vscroll .down::after { content: ""; position: absolute; left: 3px; top: 8px; border-left: 6px solid transparent; border-right: 6px solid transparent; border-bottom: 7px solid #ccc; }
.vscroll .down { display: block; position: relative; height: 20px; }
.vscroll .down::after { border-bottom: 0; border-top: 7px solid #ccc; top: 290px; }

.splitter { width: 10px; flex: none; background-color: #eee; background-image: radial-gradient(circle, #cfcfcf 1.4px, transparent 1.8px); background-size: 5px 7px; position: relative; }
.splitter.wide { width: 13px; }
.grip { position: absolute; top: 648px; width: 9px; height: 104px; border: 2px solid #888; background: #fff; }
.grip.left { left: 0; border-right: 0; }
.grip.left::after { content: ""; position: absolute; left: -1px; top: 42px; border-right: 6px solid #666; border-top: 7px solid transparent; border-bottom: 7px solid transparent; }
.grip.right { right: 0; border-right: 0; }
.grip.right::after { content: ""; position: absolute; left: -1px; top: 42px; border-left: 6px solid #666; border-top: 7px solid transparent; border-bottom: 7px solid transparent; }

.center { width: 1452px; flex: none; display: flex; flex-direction: column; min-height: 0; overflow: hidden; background: #000; }
.doctabs { height: 46px; flex: none; background: #dcdcdc; display: flex; border-bottom: 2px solid #ddd; }
.dt { height: 44px; display: flex; align-items: center; font-size: 25px; flex: none; background: #eee; }
.dt svg { fill: none; flex: none; }
.dt.start { width: 152px; padding-left: 16px; border-right: 2px solid #ddd; }
.dt-logo { width: 32px; height: 28px; stroke: #3a8bff; stroke-width: 4; margin-right: 13px; }
.dt-pcb { width: 30px; height: 34px; stroke: #0a9a0a; stroke-width: 2.5; margin-right: 13px; }
.dt.cur { width: 620px; padding-left: 18px; background: #e3f4fd; color: #3a8bff; }
.dt.other { width: 339px; padding-left: 38px; border-right: 2px solid #ddd; background: #eee linear-gradient(#ddd, #ddd) 19px 0 / 2px 100% no-repeat; }
.board { display: block; flex: none; font-family: "Liberation Sans", sans-serif; }

.tick line, .tick path { stroke: #333; fill: none; }
.rtext text { font-family: "DejaVu Sans Mono", monospace; font-size: 12px; fill: #777; }
.hole circle { fill: #111; stroke: #555; stroke-width: 1; }
.silk > * { fill: none; stroke: #fdc426; }
.silkfill { fill: #fdc426; }
.red rect { fill: #ff0a1e; }
.pink rect { fill: #ff1dff; }
.lime rect { fill: #3eff22; }
.pad circle { fill: #666; stroke: #5a1a70; stroke-width: 1; }
.drill circle { fill: #111; }
.rat path { stroke: #5a5aff; stroke-width: 1.2; fill: none; }
.air path { stroke: #2ee81e; stroke-width: 1.2; fill: none; }
.lbl text { fill: #ddd; text-anchor: middle; }
.ref { fill: #fdc426; font-weight: 700; }
.layers rect { fill: #333; }
.layers .lybox { fill: #555; }
.layers text { fill: #ddd; font-family: "Noto Sans CJK SC", sans-serif; font-size: 24px; }

.rightside { width: 575px; flex: none; display: flex; flex-direction: column; min-height: 0; }
.rightmain { height: 1250px; flex: none; display: flex; }
.filterpanel { width: 517px; flex: none; background: #fff; display: flex; flex-direction: column; }
.filterhead { height: 80px; flex: none; display: flex; padding: 16px 0 0 30px; }
.selectbox.scheme { width: 309px; height: 47px; padding: 0 18px 0 20px; }
.resetbtn { width: 90px; height: 47px; margin-left: 58px; border: 2px solid #ddd; border-radius: 4px; color: #3a8bff; font-size: 24px; text-decoration: underline; display: flex; align-items: center; justify-content: center; }
.filterbody { flex: 1; display: flex; min-height: 0; }
.filterlist { width: 495px; flex: none; overflow: hidden; font-size: 24px; }
.vscroll.small { background: #f6f6f6; border-right: 2px solid #ddd; padding: 0 0 0 1px; }
.vscroll.small .thumb { height: 840px; background: #bbb; }
.fall { height: 60px; padding: 3px 0 0 21px; display: flex; align-items: center; padding-bottom: 3px; }
.fall.first { padding-top: 2px; }
.fsec { height: 48px; background: #eee; display: flex; align-items: center; padding: 0 0 2px 15px; color: #444; }
.fsec.tall { height: 50px; }
.fsec i { width: 0; height: 0; border-left: 9px solid transparent; border-right: 9px solid transparent; border-top: 11px solid #666; margin-right: 11px; }
.fgrid { display: grid; grid-template-columns: 249px 1fr; grid-auto-rows: 60px; border-top: 2px solid #eee; padding-top: 2px; margin-bottom: -2px; }
.fgrid > div { display: flex; align-items: center; padding: 0 0 3px 21px; white-space: nowrap; }
.cb { width: 28px; height: 28px; border: 2px solid #ccc; border-radius: 3px; background: #fff; flex: none; position: relative; top: 2px; margin-right: 11px; }
.cb.on { background: #3a96ff; border-color: #3a96ff; }
.cb.mid { background: #bbb; border-color: #bbb; }
.cb.on::after { content: ""; position: absolute; left: -2px; top: -2px; width: 28px; height: 28px; background: #fff; clip-path: polygon(6px 17px, 9px 15px, 12px 21px, 20px 7px, 22px 7px, 14px 26px, 11px 26px); }
.eye { width: 32px; height: 22px; fill: none; stroke: #000; stroke-width: 2; margin-right: 11px; flex: none; position: relative; }

.rail.right { width: 58px; padding-left: 2px; border-left: 2px solid #ccc; border-right: 0; }
.rail.right .pinbox { padding-right: 0; }
.rail.right .railtab { width: 56px; height: 142px; border-right: 0; padding-right: 12px; }
.rail.right .railtab + .railtab { height: 143px; }
.rail.right .railtab.active { margin-left: -2px; width: 56px; }

.status { flex: 1; background: #eee; font-size: 24px; border-top: 2px solid #ddd; margin-top: -2px; position: relative; }
.status > div { height: 48px; border-bottom: 2px solid #ddd; display: grid; grid-template-columns: 55px 196px 35px auto; column-gap: 21px; align-items: center; justify-content: start; }
.status b { font-weight: 400; text-align: right; }
.status span { white-space: nowrap; }

/* task bar */
.taskbar { height: 95px; flex: none; background: #272727; border-top: 1px solid #3c3c3c; display: flex; padding-left: 24px; gap: 8px; position: relative; color: #fff; }
.slot { width: 80px; height: 80px; margin-top: 7px; padding-top: 15px; border-radius: 7px; display: flex; flex-direction: column; align-items: center; gap: 8px; flex: none; }
.slot.lit { background: #7e464a; }
.slot.cur { background: #33363b; }
.app-ico { width: 48px; height: 48px; flex: none; display: block; }
.dot { width: 12px; height: 6px; border-radius: 3px; background: #999; display: block; flex: none; }
.pinkdot { background: #ff9aa5; }
.bluedot { width: 32px; background: #45b7fa; }
.eda-tile { width: 48px; height: 48px; background: #5f8bff; position: relative; display: block; flex: none; }
.eda-tile svg { position: absolute; left: 4px; top: 4px; width: 42px; height: 32px; fill: none; stroke: #fff; stroke-width: 4; }
.eda-tile small { position: absolute; right: 2px; bottom: 1px; font-size: 13px; line-height: 14px; }
.bili { width: 48px; height: 48px; border-radius: 9px; background: #ff4a80; font-size: 16px; font-weight: 700; color: #fff; display: flex; align-items: center; justify-content: center; flex: none; }
.tray { margin-left: auto; display: flex; align-items: center; padding-right: 37px; }
.tr { width: 34px; height: 30px; margin-left: 16px; fill: none; stroke: #fff; stroke-width: 2; flex: none; }
.chevup { width: 22px; height: 12px; margin-right: 0; }
.ime { width: auto; height: auto; stroke: none; font-size: 29px; margin-left: 40px; margin-right: 16px; }
.tr.bat { margin-left: 14px; margin-right: 34px; }
.clock { display: flex; flex-direction: column; align-items: flex-end; font-size: 24.5px; line-height: 33px; }

/* design menu */
.ddmenu { position: absolute; left: 808px; top: 54px; width: 475px; height: 1078px; background: #fff; border: 2px solid #dcdcdc; border-bottom-width: 3px; box-shadow: 0 2px 6px rgba(0, 0, 0, .25); font-size: 24px; color: #444; z-index: 5; }
.ddmenu hr { height: 2px; margin: 0; border: 0; background: #dcdcdc; }
.mi { height: 56px; display: flex; align-items: center; white-space: nowrap; padding-bottom: 4px; }
.mi-ico { width: 34px; height: 34px; margin: 0 14px 0 15px; display: flex; align-items: center; flex: none; }
.mi-ico svg { width: 34px; height: 34px; fill: none; stroke: #000; stroke-width: 2; }
.mi kbd { font: inherit; margin-left: auto; padding-right: 23px; }
.mi.hot { background: #e3f4fd; color: #3a86f0; }
.mi.dim { color: #aaa; }
.mi .sub { margin-left: auto; margin-right: 26px; border-left: 8px solid #333; border-top: 8px solid transparent; border-bottom: 8px solid transparent; }
.uq { font-size: 34px; line-height: 34px; color: #000; font-weight: 400; }
.uq small { font-size: 24px; }

.notes { position: absolute; left: 0; top: 0; z-index: 9; pointer-events: none; font-family: "Noto Sans CJK SC", sans-serif; }
.notes path, .notes rect { fill: none; stroke: #fc3d3d; stroke-width: 2; }
.notes .dotmark { fill: #fc3d3d; }
.notes .num { fill: #fff; font-family: "Liberation Serif", serif; font-size: 46px; text-anchor: middle; }
.notes .cap { fill: #fc3d3d; font-size: 50px; }
```
